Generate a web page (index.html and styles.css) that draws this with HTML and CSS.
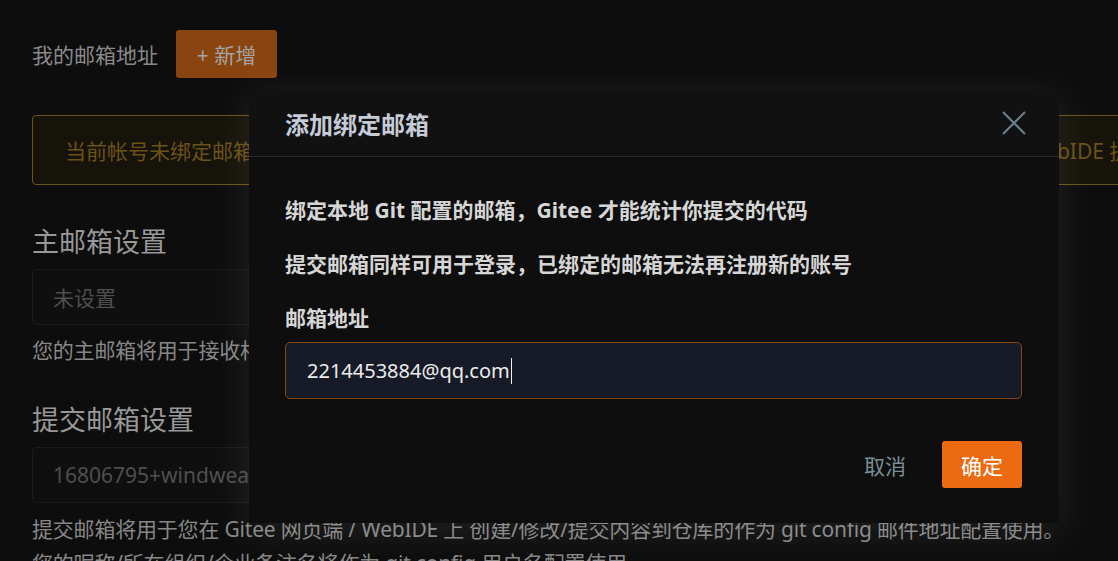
FILE: index.html
```html
<!DOCTYPE html>
<html lang="zh-CN">
<head>
<meta charset="utf-8">
<title>添加绑定邮箱</title>
<link rel="stylesheet" href="styles.css">
</head>
<body>
<div class="page">
  <div class="top-row">
    <span class="top-label">我的邮箱地址</span>
    <button class="add-btn">+ 新增</button>
  </div>
  <div class="alert">当前帐号未绑定邮箱，你在本地通过 Git 提交的代码将无法被统计到贡献度中，也无法使用其它网页端 / WebIDE 提交代码。</div>
  <h2 class="sec-title">主邮箱设置</h2>
  <div class="field"><span class="placeholder">未设置</span></div>
  <p class="desc">您的主邮箱将用于接收相关通知邮件，以及进行帐号安全验证等操作。</p>
  <h2 class="sec-title second">提交邮箱设置</h2>
  <div class="field"><span class="placeholder">16806795+windweaver@user.noreply.gitee.com</span></div>
  <p class="desc long">提交邮箱将用于您在 Gitee 网页端 / WebIDE 上 创建/修改/提交内容到仓库的作为 git config 邮件地址配置使用。<br>您的昵称/所在组织/企业备注名将作为 git config 用户名配置使用</p>
</div>

<div class="modal">
  <div class="modal-header">
    <span class="modal-title">添加绑定邮箱</span>
    <svg class="close" width="24" height="24" viewBox="0 0 24 24"><path d="M1 1 L23 23 M23 1 L1 23" stroke="#6c7f8a" stroke-width="2.2" fill="none"/></svg>
  </div>
  <div class="modal-body">
    <p class="info">绑定本地 Git 配置的邮箱，Gitee 才能统计你提交的代码</p>
    <p class="info gap">提交邮箱同样可用于登录，已绑定的邮箱无法再注册新的账号</p>
    <p class="info gap">邮箱地址</p>
    <div class="email-input"><span>2214453884@qq.com</span><span class="caret"></span></div>
  </div>
  <div class="modal-footer">
    <button class="cancel">取消</button>
    <button class="ok">确定</button>
  </div>
</div>
</body>
</html>
```

FILE: styles.css
```css
html, body {
  margin: 0;
  padding: 0;
}
body {
  background: #0d0d0d;
  font-family: "Noto Sans", "Noto Sans CJK SC", sans-serif;
  overflow: hidden;
  width: 1118px;
  height: 561px;
  position: relative;
}
.page {
  padding: 30px 0 0 32px;
  width: 1300px;
}
.top-row {
  display: flex;
  align-items: center;
  gap: 18px;
  height: 48px;
}
.top-label {
  font-size: 21px;
  color: #8a8a8a;
}
.add-btn {
  height: 48px;
  width: 101px;
  border: none;
  border-radius: 3px;
  background: #8a4410;
  color: #a4a4a4;
  font-family: inherit;
  font-size: 21px;
  padding: 0;
}
.alert {
  margin-top: 37px;
  height: 70px;
  box-sizing: border-box;
  width: 1250px;
  border: 1px solid #6c5419;
  border-radius: 4px;
  background: #16130b;
  color: #6b5217;
  font-size: 21px;
  display: flex;
  align-items: center;
  padding-left: 32px;
  white-space: nowrap;
}
.sec-title {
  margin: 39px 0 0;
  font-size: 27px;
  line-height: 36px;
  font-weight: normal;
  color: #989898;
}
.sec-title.second {
  margin-top: 35px;
}
.field {
  margin-top: 9px;
  height: 56px;
  width: 1000px;
  box-sizing: border-box;
  border: 1px solid #1b1b1b;
  border-radius: 4px;
  background: #0f0f0f;
  display: flex;
  align-items: center;
  padding-left: 20px;
}
.placeholder {
  font-size: 21px;
  color: #4e4e4e;
}
.desc {
  margin: 8px 0 0;
  font-size: 21px;
  line-height: 34px;
  color: #878787;
  white-space: nowrap;
  letter-spacing: -0.2px;
}
.desc.long {
  margin-top: 9px;
}

.modal {
  position: absolute;
  left: 249px;
  top: 90px;
  width: 810px;
  height: 433px;
  background: #0e0e0e;
  box-shadow: 0 8px 36px 6px rgba(255, 255, 255, 0.07);
  display: flex;
  flex-direction: column;
}
.modal-header {
  height: 66px;
  background: #111111;
  border-bottom: 1px solid #25282e;
  display: flex;
  align-items: center;
  justify-content: space-between;
  padding: 0 33px 0 36px;
}
.modal-title {
  font-size: 24px;
  font-weight: bold;
  color: #c6cbd7;
}
.close {
  display: block;
}
.modal-body {
  padding: 38px 37px 0 36px;
}
.info {
  margin: 0;
  font-size: 21px;
  line-height: 30px;
  font-weight: bold;
  color: #d6d6d6;
}
.info.gap {
  margin-top: 24px;
}
.email-input {
  margin-top: 9px;
  height: 57px;
  box-sizing: border-box;
  border: 1px solid #86460f;
  border-radius: 5px;
  background: #161b27;
  display: flex;
  align-items: center;
  padding-left: 21px;
  font-size: 20px;
  color: #ececec;
}
.caret {
  display: inline-block;
  width: 1px;
  height: 26px;
  background: #f0f0f0;
  margin-left: 1px;
}
.modal-footer {
  margin-top: 42px;
  display: flex;
  justify-content: flex-end;
  align-items: center;
  gap: 16px;
  padding-right: 37px;
}
.cancel {
  background: none;
  border: none;
  font-family: inherit;
  font-size: 21px;
  color: #7a8e98;
  padding: 0 20px;
  height: 47px;
}
.ok {
  width: 80px;
  height: 47px;
  border: none;
  border-radius: 3px;
  background: #ec6a11;
  color: #ffffff;
  font-family: inherit;
  font-size: 21px;
  padding: 0;
}
```
